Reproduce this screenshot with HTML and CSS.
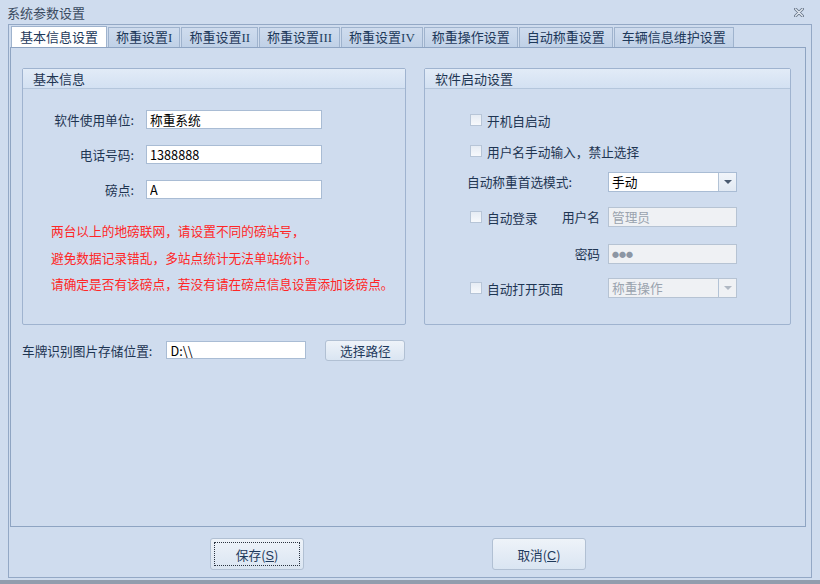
FILE: index.html
```html
<!DOCTYPE html>
<html lang="zh-CN">
<head>
  <meta charset="UTF-8" />
  <title>系统参数设置</title>
  <link rel="stylesheet" href="styles.css">
</head>
<body>
  <div class="titlebar">
    <span class="title">系统参数设置</span>
    <svg class="close" width="10" height="9" viewBox="0 0 10 9">
      <path d="M1.5 1 L8.5 8 M8.5 1 L1.5 8" stroke="#6b7a8d" stroke-width="3" stroke-linecap="round" />
      <path d="M1.5 1 L8.5 8 M8.5 1 L1.5 8" stroke="#e4eaf2" stroke-width="1.2" stroke-linecap="round" />
    </svg>
  </div>

  <div class="frame">
    <div class="tabs">
      <div class="tab active">基本信息设置</div>
      <div class="tab">称重设置<span class="num">I</span></div>
      <div class="tab">称重设置<span class="num">II</span></div>
      <div class="tab">称重设置<span class="num">III</span></div>
      <div class="tab">称重设置<span class="num">IV</span></div>
      <div class="tab">称重操作设置</div>
      <div class="tab">自动称重设置</div>
      <div class="tab">车辆信息维护设置</div>
    </div>

    <div class="page">
      <div class="groups">
        <div class="group basic">
          <div class="group-head">基本信息</div>
          <div class="form">
            <label>软件使用单位:</label>
            <input class="field" type="text" value="称重系统" readonly>
            <label>电话号码:</label>
            <input class="field" type="text" value="1388888" readonly>
            <label>磅点:</label>
            <input class="field" type="text" value="A" readonly>
          </div>
          <div class="notes">
            <p>两台以上的地磅联网，请设置不同的磅站号，</p>
            <p>避免数据记录错乱，多站点统计无法单站统计。</p>
            <p>请确定是否有该磅点，若没有请在磅点信息设置添加该磅点。</p>
          </div>
        </div>

        <div class="group startup">
          <div class="group-head">软件启动设置</div>
          <div class="opts">
            <div class="check wide"><span class="box"></span>开机自启动</div>
            <div class="check wide"><span class="box"></span>用户名手动输入，禁止选择</div>
            <div class="lbl span2">自动称重首选模式:</div>
            <div class="combo"><span class="value">手动</span><span class="arrow"></span></div>
            <div class="check"><span class="box"></span>自动登录</div>
            <div class="lbl right">用户名</div>
            <div class="field disabled">管理员</div>
            <div class="lbl right col2">密码</div>
            <div class="field disabled dots">●●●</div>
            <div class="check span2"><span class="box"></span>自动打开页面</div>
            <div class="combo disabled"><span class="value">称重操作</span><span class="arrow"></span></div>
          </div>
        </div>
      </div>

      <div class="path-row">
        <label>车牌识别图片存储位置:</label>
        <input class="field path" type="text" value="D:\\" readonly>
        <button class="btn small">选择路径</button>
      </div>
    </div>

    <div class="actions">
      <button class="btn big focus">保存(<u>S</u>)</button>
      <button class="btn big">取消(<u>C</u>)</button>
    </div>
  </div>
  <div class="bottom-line"></div>
</body>
</html>
```

FILE: styles.css
```css
* { box-sizing: border-box; }
body {
  margin: 0;
  width: 820px;
  height: 584px;
  overflow: hidden;
  background: #cfdcee;
  font-family: "Noto Sans CJK SC", sans-serif;
  font-size: 12.7px;
  color: #1e3552;
}

.titlebar {
  height: 24px;
  display: flex;
  align-items: center;
  justify-content: space-between;
  padding: 0 16px 0 7px;
}
.title { font-size: 13px; color: #3a4a60; }

.frame {
  margin: 0 8px;
  height: 554px;
  border: 1px solid #93a8c5;
  display: flex;
  flex-direction: column;
}

.tabs {
  height: 22px;
  display: flex;
  align-items: flex-end;
  gap: 1px;
  padding-left: 2px;
}
.tab {
  height: 20px;
  padding: 0 7px;
  border: 1px solid #9fb3cd;
  border-bottom: none;
  background: linear-gradient(#cfdcee, #c0d1e7);
  font-size: 13px;
  line-height: 18px;
  color: #1e395b;
  white-space: nowrap;
}
.tab.active { height: 21px; padding: 0 8px; background: #fff; line-height: 19px; }
.tab .num { font-family: "Liberation Serif", serif; color: #243f60; }

.page {
  height: 480px;
  margin: 0 5px 0 1px;
  border: 1px solid #8ea4c2;
  padding: 20px 0 0 11px;
}

.groups { display: flex; gap: 18px; }
.group {
  height: 257px;
  border: 1px solid #9fb3cf;
  border-radius: 2px;
}
.basic { width: 384px; }
.startup { width: 367px; }
.group-head {
  height: 20px;
  line-height: 19px;
  padding-left: 10px;
  font-size: 13px;
  background: linear-gradient(#e2ebf7, #d3e1f2);
  border-bottom: 1px solid #b4c6dc;
}

.field {
  height: 19px;
  padding: 0 3px;
  border: 1px solid #a9bcd4;
  background: #fff;
  font-family: "Noto Sans CJK SC", sans-serif;
  font-size: 12.7px;
  color: #000;
  outline: none;
}
.field.disabled {
  height: 20px;
  line-height: 18px;
  background: #eff1f4;
  border-color: #b6c3d3;
  color: #9aa3ae;
}
.field.dots { font-size: 7px; color: #8c96a3; }

.form {
  display: grid;
  grid-template-columns: 111px 176px;
  column-gap: 12px;
  row-gap: 16px;
  padding-top: 21px;
}
.form label { text-align: right; line-height: 19px; }

.notes { margin-top: 19px; padding-left: 28px; color: #ff2626; }
.notes p { margin: 0; line-height: 26.5px; }

.opts {
  display: grid;
  grid-template-columns: 78px 55px 129px;
  grid-template-rows: 31px 31px 35px 37px 34px 20px;
  column-gap: 4px;
  align-items: start;
  padding: 21px 0 0 42px;
}
.opts .wide { grid-column: 1 / 4; }
.opts .span2 { grid-column: 1 / 3; }
.opts .col2 { grid-column: 2; }
.lbl { height: 20px; line-height: 20px; white-space: nowrap; }
.lbl.right { text-align: right; padding-right: 4px; }

.check {
  height: 20px;
  display: flex;
  align-items: center;
  gap: 5px;
  padding-left: 3px;
  white-space: nowrap;
}
.box {
  width: 12px;
  height: 12px;
  border: 1px solid #b7c5d7;
  background: linear-gradient(#e6ecf4, #f7f9fc);
}

.combo {
  height: 20px;
  display: flex;
  border: 1px solid #a9bcd4;
  background: #fff;
  color: #000;
}
.combo .value { flex: 1; padding-left: 3px; line-height: 18px; }
.combo .arrow {
  width: 18px;
  border-left: 1px solid #b3c3d6;
  background: linear-gradient(#f1f5fa, #e1e9f3);
  display: flex;
  align-items: center;
  justify-content: center;
}
.combo .arrow::after {
  content: "";
  border-left: 4px solid transparent;
  border-right: 4px solid transparent;
  border-top: 4px solid #4a5a70;
}
.combo.disabled { background: #eff1f4; border-color: #b6c3d3; color: #9aa3ae; }
.combo.disabled .arrow { background: #eff1f4; }
.combo.disabled .arrow::after { border-top-color: #b0b8c3; }

.path-row {
  display: flex;
  align-items: center;
  margin-top: 14px;
  height: 22px;
}
.path-row label { margin-right: 14px; }
.field.path { width: 140px; height: 18px; line-height: 16px; }

.btn {
  border: 1px solid #b1c0d3;
  border-radius: 3px;
  background: linear-gradient(#eef3f9, #dae5f2);
  font-family: "Noto Sans CJK SC", sans-serif;
  font-size: 12.7px;
  color: #1e395b;
  padding: 0;
}
.btn.small { width: 80px; height: 21px; margin-left: 19px; }
.btn.big { width: 94px; height: 32px; }
.btn.focus { outline: 1px dotted #2a3340; outline-offset: -5px; }
.btn u { font-family: "Liberation Sans", sans-serif; }

.actions {
  flex: 1;
  display: flex;
  align-items: flex-start;
  gap: 188px;
  padding: 11px 0 0 201px;
}

.bottom-line {
  height: 4px;
  margin-top: 2px;
  background: #929dad;
}
```
